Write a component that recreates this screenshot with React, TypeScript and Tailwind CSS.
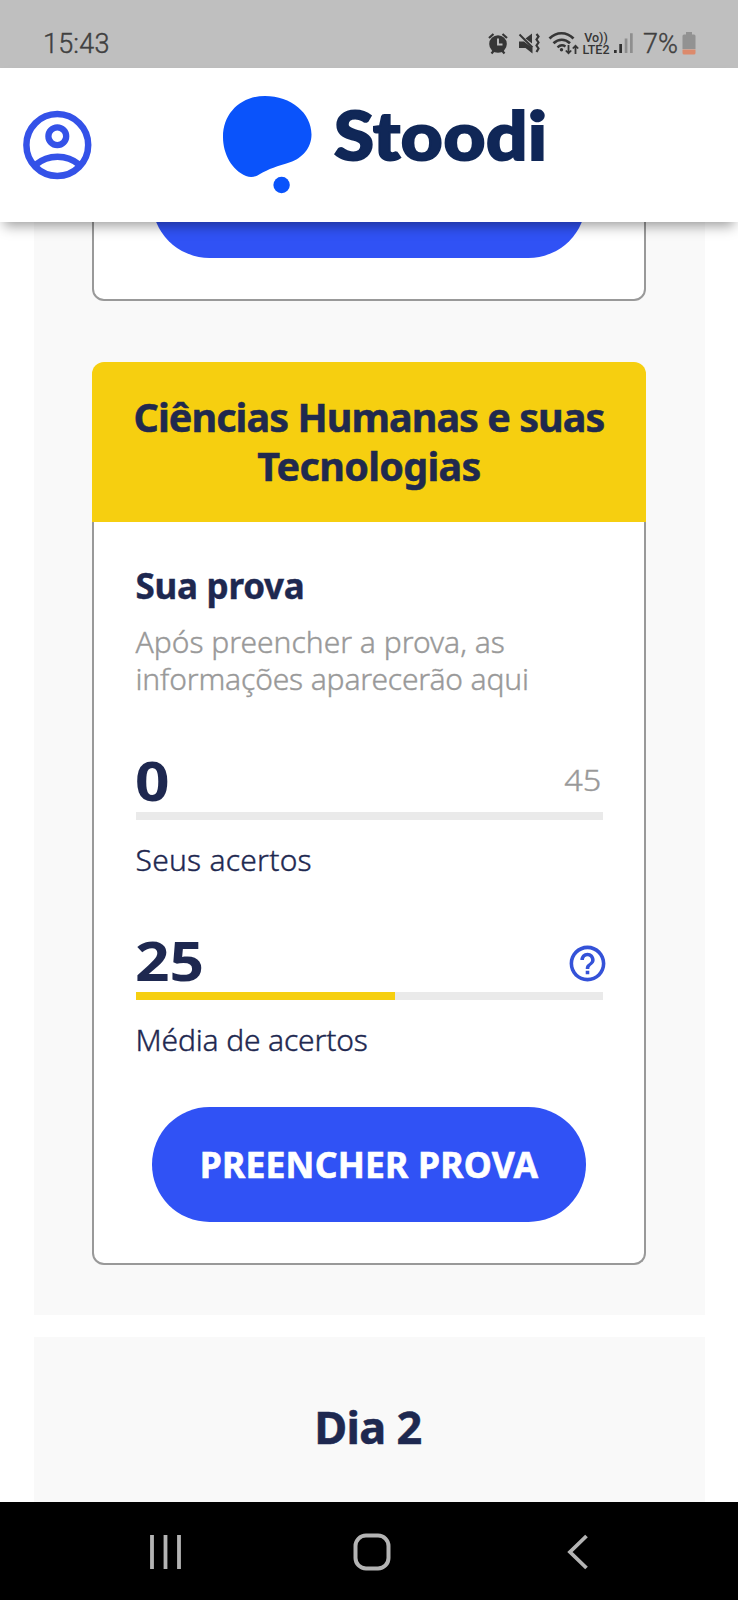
import React from 'react';
import { MdHelpOutline } from 'react-icons/md';

interface Score {
  id: string;
  value: number;
  total: number;
  label: string;
  labelClass: string;
  help?: boolean;
}

const SCORES: Score[] = [
  { id: 'own', value: 0, total: 45, label: 'Seus acertos', labelClass: 'tracking-[0.25px]' },
  { id: 'average', value: 25, total: 45, label: 'Média de acertos', labelClass: 'tracking-[-0.15px]', help: true },
];

function StatusBar() {
  return (
    <div className="flex h-[68px] shrink-0 items-start bg-[#bfbfbf] pl-[43px] pt-[28px] font-['Roboto'] text-[27px] leading-[30px] text-[#404040]">
      <span className="mt-px w-[443px] font-light tracking-[0.2px] [-webkit-text-stroke:0.4px_#404040]">15:43</span>
      <svg className="h-[30px] w-[94px] shrink-0" viewBox="486 28 94 30" fill="none" stroke="#363636">
        <circle cx="498" cy="44" r="8.8" fill="#363636" stroke="none" />
        <path d="M489 38l4.5-4M507 38l-4.5-4M491.5 53.5l2.5-3M504.5 53.5l-2.5-3" strokeWidth="2.2" />
        <path d="M498 38.5v6h4.5" stroke="#bfbfbf" strokeWidth="1.9" />
        <path d="M519 41.5h5l8.5 6.5v5.5l-7-5.5h-6.5zM525.5 38.5l6.5-5v10z" fill="#363636" stroke="none" />
        <path d="M519.5 34.5l13 13" strokeWidth="1.9" />
        <path d="M536.5 34l2 2.5-2 3 2 3-2 3 2 3-2 3.5" strokeWidth="2.2" />
        <path d="M549.5 38.5c7-7 17-7 24 0M553.5 43.3c5-4.7 11.5-4.7 16.5 0" strokeWidth="2.7" />
        <path d="M557.5 47.3c2.5-2.3 5.5-2.5 8-.8" strokeWidth="2.4" />
        <circle cx="561.5" cy="49.8" r="1.7" fill="#363636" stroke="none" />
        <path d="M568.5 45v8M565.8 50.5l2.7 2.8 2.7-2.8M575.5 54v-8M572.8 48.5l2.7-2.8 2.7 2.8" strokeWidth="1.8" />
      </svg>
      <span className="flex w-[32px] flex-col items-center pt-[4px] text-[12.5px] font-medium leading-[12px] text-[#363636]">
        <span>Vo))</span>
        <span>LTE2</span>
      </span>
      <svg className="h-[30px] w-[22px] shrink-0" viewBox="612 28 22 30">
        <path d="M614 50h2.7v3H614zM619.3 44h2.7v9h-2.7z" fill="#303030" />
        <path d="M624.7 38.5h2.7V53h-2.7zM630 33.3h2.7V53H630z" fill="#8e8e8e" />
      </svg>
      <span className="ml-[9px] mt-px w-[38px] font-light [-webkit-text-stroke:0.4px_#404040]">7%</span>
      <svg className="h-[30px] w-[16px] shrink-0" viewBox="681 28 16 30">
        <path d="M682.5 36q0-1.5 1.5-1.5h2V32h6v2.5h2q1.5 0 1.5 1.500v13h-13z" fill="#929292" />
        <path d="M682.5 49.5h13v3.5q0 1.5-1.5 1.5h-10q-1.5 0-1.5-1.5z" fill="#dc8a6c" />
      </svg>
    </div>
  );
}

function Header() {
  return (
    <header className="relative z-10 flex h-[153.5px] shrink-0 bg-white shadow-[0_8px_12px_-4px_rgba(0,0,0,0.38)]">
      <svg className="ml-[22px] mt-[42px] h-[70px] w-[70px]" viewBox="22 110 70 70" fill="none" stroke="#3452e8" strokeWidth="6.5">
        <circle cx="57.3" cy="145" r="30.9" />
        <circle cx="57.3" cy="136.3" r="8.9" strokeWidth="6.3" />
        <path d="M36 164.5C48 154 67 154 79 164.5" />
      </svg>
      <svg className="ml-[130px] mt-[26px] h-[102px] w-[92px]" viewBox="222 94 92 102" fill="#0a53fb">
        <path d="M265 96C291 96 311.500 113 311.500 134.500C311.500 148 302 158.500 290 162.200C278 166 268 169 260 174C255.500 177 251 178 246 176C232 170 223 154 223 137C223 113 241 96 265 96Z" />
        <circle cx="281.6" cy="185" r="8.2" />
      </svg>
      <span className="ml-[20px] mt-[27px] origin-left scale-x-[1.1] font-['Lato'] text-[66px] font-black leading-[80px] tracking-[0.6px] text-[#102757] [-webkit-text-stroke:2px_#102757]">
        Stoodi
      </span>
    </header>
  );
}

function ScoreRow({ score }: { score: Score }) {
  const filled = (score.value / score.total) * 100;

  return (
    <div className="mt-[54px]">
      <div className="flex h-[56px] justify-between">
        <span className="-ml-px mt-[2px] origin-left scale-x-[1.14] text-[53px] font-bold leading-[56px]">{score.value}</span>
        {score.help ? (
          <MdHelpOutline className="-mr-[6px] mt-[10.5px] h-[43px] w-[43px] text-[#3452d8]" />
        ) : (
          <span className="mr-px mt-[10px] origin-right scale-x-[1.08] text-[30px] font-light leading-[37px] text-[#999] [-webkit-text-stroke:0.4px_#999]">
            {score.total}
          </span>
        )}
      </div>
      <div className="mt-[5px] h-[8px] bg-[#eaeaea]">
        <div className="h-full bg-[#f6cf10]" style={{ width: `${filled}%` }} />
      </div>
      <p className={`mt-[22px] text-[30px] font-light leading-[35px] [-webkit-text-stroke:0.4px_#1e2850] ${score.labelClass}`}>
        {score.label}
      </p>
    </div>
  );
}

function SubjectCard() {
  return (
    <section className="mt-[61px]">
      <h2 className="h-[160px] rounded-t-[12px] bg-[#f6cf10] pt-[31px] text-center text-[39.5px] font-bold leading-[49px] text-[#20294e] [-webkit-text-stroke:0.5px_#20294e]">
        <span className="tracking-[-0.95px]">Ciências Humanas e suas</span>
        <br />
        <span className="tracking-[-0.7px]">Tecnologias</span>
      </h2>
      <div className="h-[743px] rounded-b-[12px] border-2 border-t-0 border-[#999] bg-white px-[41.5px] pt-[43px]">
        <h3 className="mt-px text-[35px] font-bold leading-[40px] tracking-[-0.25px] [-webkit-text-stroke:0.4px_#1e2850]">
          Sua prova
        </h3>
        <p className="mt-[17px] whitespace-nowrap text-[30px] font-light leading-[37px] text-[#999] [-webkit-text-stroke:0.4px_#999]">
          Após preencher a prova, as
          <br />
          <span className="tracking-[-0.15px]">informações aparecerão aqui</span>
        </p>
        {SCORES.map((s) => (
          <ScoreRow key={s.id} score={s} />
        ))}
        <button className="mx-auto mt-[50px] block h-[115px] w-[434px] whitespace-nowrap rounded-full bg-[#3052f5] pt-px text-[35.5px] font-bold tracking-[0.2px] text-white [-webkit-text-stroke:0.6px_#fff]">
          PREENCHER PROVA
        </button>
      </div>
    </section>
  );
}

function NavBar() {
  return (
    <nav className="flex h-[98.5px] shrink-0 items-center justify-between bg-black px-[149px] pt-[3px]">
      <svg className="h-[36px] w-[34px]" viewBox="0 0 34 36" stroke="#b4b4b4" strokeWidth="3.8">
        <path d="M3 1v34M16.5 1v34M30 1v34" />
      </svg>
      <svg className="mr-[6px] h-[38px] w-[38px]" viewBox="0 0 38 38" fill="none" stroke="#b4b4b4" strokeWidth="4">
        <rect x="2.5" y="2.5" width="33" height="33" rx="10.5" />
      </svg>
      <svg className="h-[36px] w-[22px]" viewBox="0 0 22 36" fill="none" stroke="#b4b4b4" strokeWidth="3.8">
        <path d="M19.5 2L3 18l16.500 16" />
      </svg>
    </nav>
  );
}

export default function App() {
  return (
    <div className="flex h-[1600px] w-[738px] flex-col overflow-hidden bg-white font-['Noto_Sans',sans-serif] text-[#1e2850]">
      <StatusBar />
      <Header />
      <main className="-mt-[0.5px] flex min-h-0 flex-1 flex-col overflow-hidden px-[33.5px]">
        <div className="h-[1094px] shrink-0 bg-[#f9f9f9] px-[58.5px]">
          <div className="h-[80px] overflow-hidden">
            <div className="-mt-[100px] h-[180px] rounded-[12px] border-2 border-[#999] bg-white pt-[20px]">
              <div className="mx-auto h-[115px] w-[434px] rounded-full bg-[#3052f5]" />
            </div>
          </div>
          <SubjectCard />
        </div>
        <div className="mt-[22px] flex-1 bg-[#f9f9f9] pr-[2px] pt-[62px] text-center text-[45px] font-bold leading-[56px] tracking-[-0.7px] [-webkit-text-stroke:0.5px_#1e2850]">
          Dia 2
        </div>
      </main>
      <NavBar />
    </div>
  );
}
